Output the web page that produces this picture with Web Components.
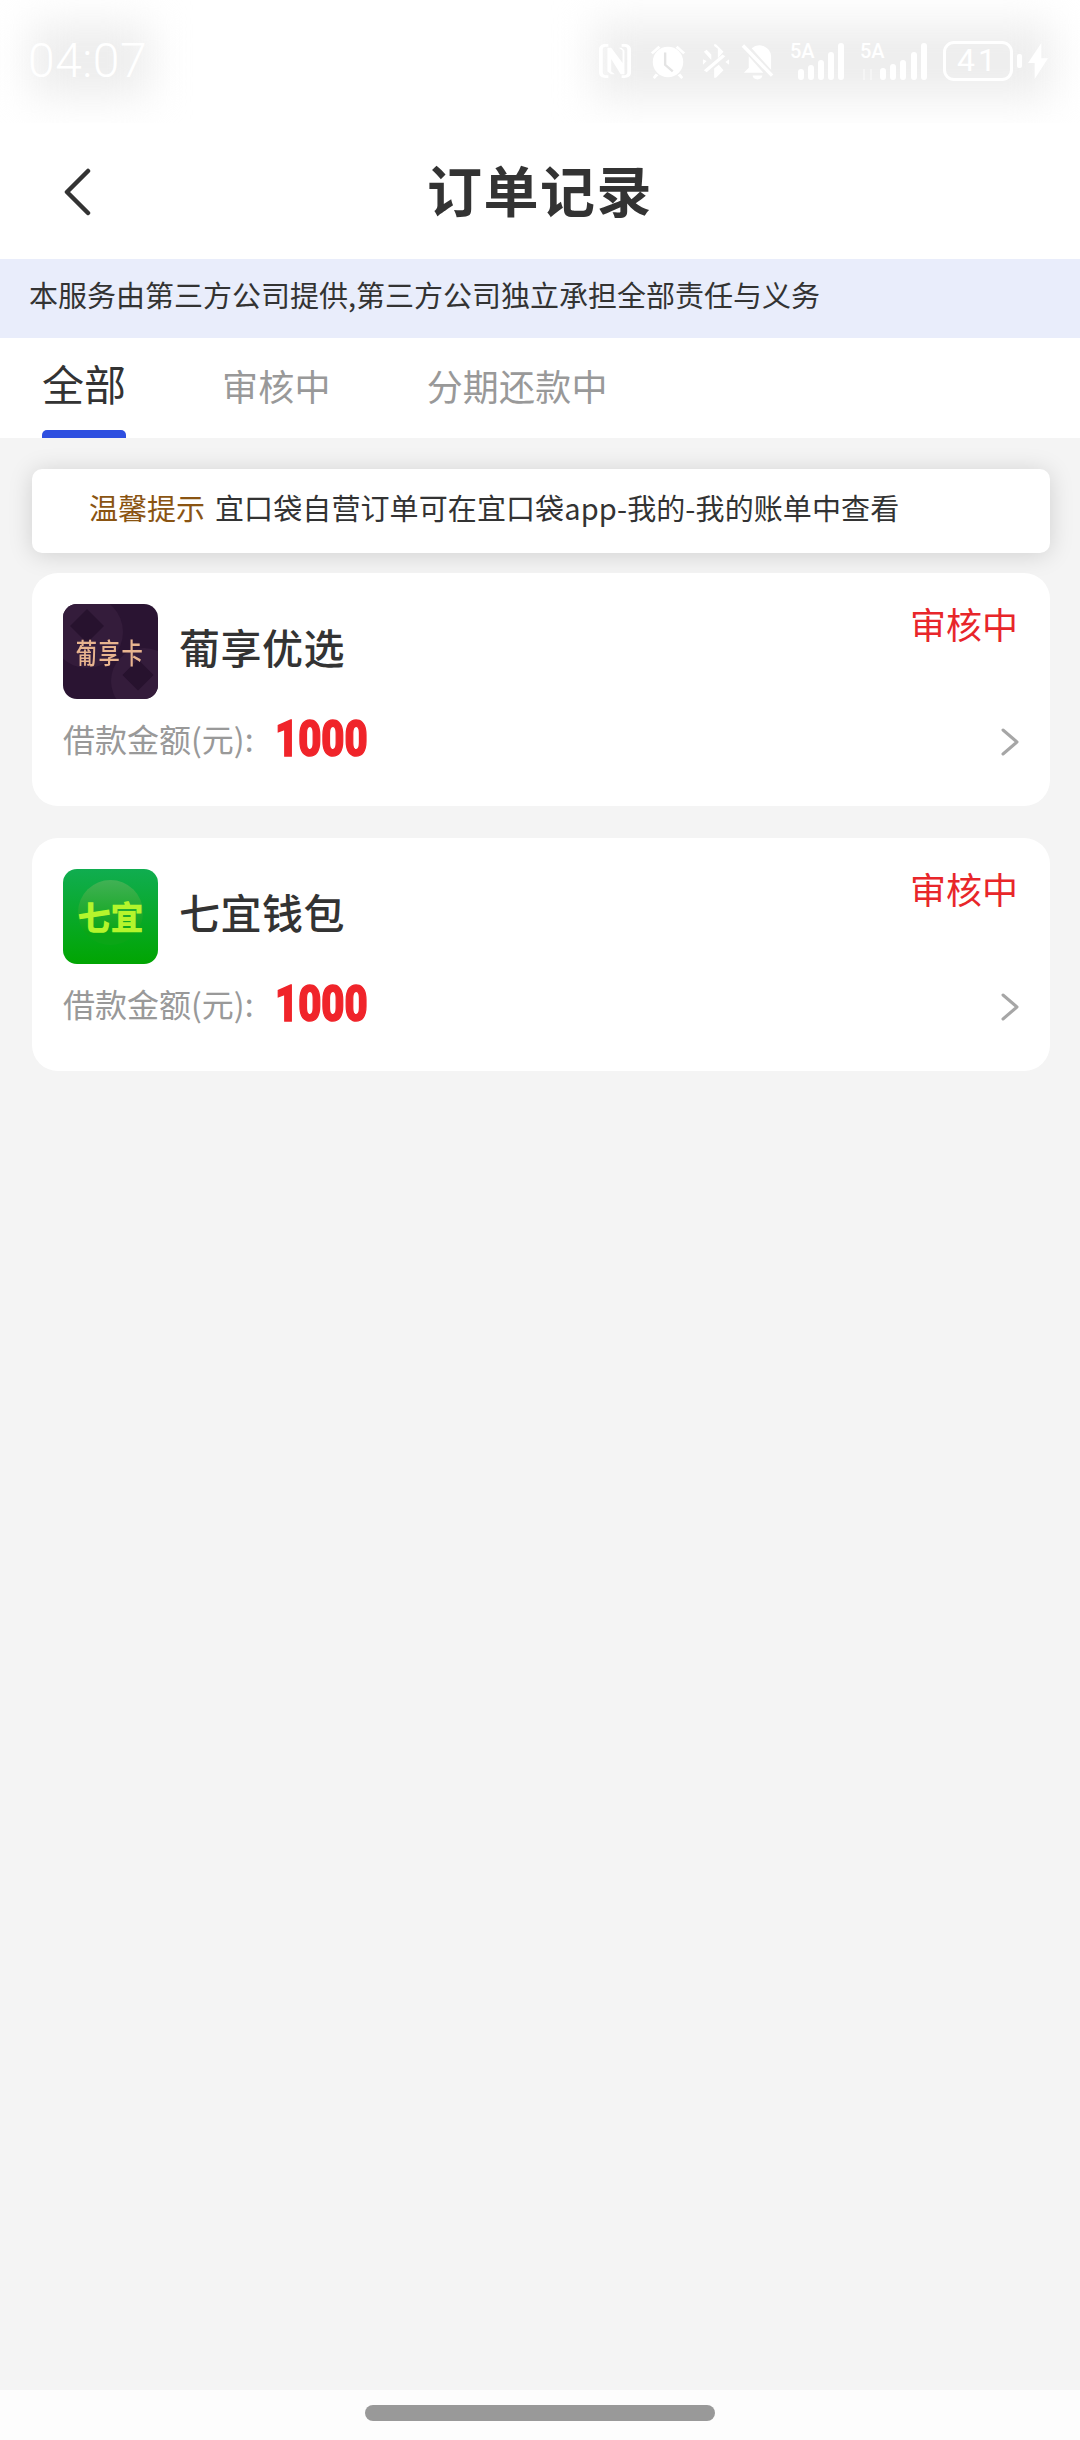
<!DOCTYPE html>
<html lang="zh"><head><meta charset="utf-8"><title>订单记录</title>
<style>
html,body{margin:0;padding:0;height:100%;background:#f4f4f4}
body{font-family:"Noto Sans CJK SC","Noto Sans",sans-serif;color:#333}
</style></head><body>
<app-screen>
  <status-bar></status-bar>
  <nav-bar>订单记录</nav-bar>
  <notice-banner>本服务由第三方公司提供,第三方公司独立承担全部责任与义务</notice-banner>
  <tab-bar>
    <tab-item active>全部</tab-item>
    <tab-item>审核中</tab-item>
    <tab-item>分期还款中</tab-item>
  </tab-bar>
  <order-list>
    <tip-card label="温馨提示">宜口袋自营订单可在宜口袋app-我的-我的账单中查看</tip-card>
    <order-card name="葡享优选" status="审核中" amount="1000"><app-logo slot="logo" kind="pu">葡享卡</app-logo></order-card>
    <order-card name="七宜钱包" status="审核中" amount="1000"><app-logo slot="logo" kind="qi">七宜</app-logo></order-card>
  </order-list>
  <home-indicator></home-indicator>
</app-screen>
<script>
function def(name, html){
  customElements.define(name, class extends HTMLElement{
    constructor(){super();const r=this.attachShadow({mode:'open'});
      r.innerHTML = typeof html==='function'?html(this):html;}
    connectedCallback(){ if(typeof html==='function') this.shadowRoot.innerHTML=html(this); }
  });
}
def('app-screen',`<style>:host{display:flex;flex-direction:column;width:1080px;height:2440px;overflow:hidden;background:#f4f4f4}</style><slot></slot>`);
def('status-bar',`<style>
:host{display:flex;justify-content:space-between;height:123px;padding:42px 32px 0 28px;box-sizing:border-box;background:#fff;color:#fff}
.g{position:relative;display:flex;height:38px}
.g::before{content:"";position:absolute;background:#ededed;filter:blur(20px);z-index:0}
.t::before{inset:-18px -4px -16px 2px}
.r::before{inset:-18px -4px -18px -4px}
.g>*{position:relative;z-index:1}
.t{font:300 48px/38px "Roboto",sans-serif;letter-spacing:.5px;width:118px}
.r{align-items:center}
svg{display:block;flex:none}
.sig{position:relative;width:55px;height:38px}
.sig b{position:absolute;left:0;top:-1px;font:500 20px/20px "Roboto",sans-serif}
.sig svg{position:absolute;left:0;top:0}
.bat{box-sizing:border-box;width:70px;height:40px;border:3px solid #fff;border-radius:11px;font:400 32px/33px "Roboto",sans-serif;text-align:center;letter-spacing:3px;margin-left:15px}
</style>
<div class="g t"><span>04:07</span></div>
<div class="g r">
<svg width="34" height="38" viewBox="0 0 36 38" fill="#fff"><path d="M8 1h3v3H8C6 4 5 5 5 7v24c0 2 1 3 3 3h3v3H8c-4 0-7-2-7-6V7c0-4 3-6 7-6zM25 1h3c4 0 7 2 7 6v24c0 4-3 6-7 6h-3v-3h3c2 0 3-1 3-3V7c0-2-1-3-3-3h-3z"/><path d="M10 5l4 0 12 16V8l-4-3h3l3 3v25h-4L14 17v13l4 3h-4l-4-3z"/></svg>
<svg style="margin-left:16px" width="40" height="38" viewBox="0 0 42 38" fill="#fff"><circle cx="21" cy="20" r="16"/><path d="M3 10l8-7 2 2-8 7zM39 10l-8-7-2 2 8 7zM8 32l-3 4 2 2 4-4zM34 32l3 4-2 2-4-4z"/><path d="M18 10v13l8 7" fill="none" stroke="#e4e4e4" stroke-width="2.5"/></svg>
<svg style="margin-left:14px" width="28" height="38" viewBox="0 0 30 38" fill="#fff"><path d="M13 1h2l8 8-6 7V6l-4-3zM13 37h2l8-8-5-6-5 4v7zM2 9l3-2 5 5v6zM5 31l-3-2 20-17 3 2zM1 17l4 2-4 4zM29 17v6l-4-3z"/></svg>
<svg style="margin-left:10px" width="35" height="38" viewBox="0 0 36 38" fill="#fff"><path d="M12 6a12 12 0 0 1 20 8v14zM9 14v12l-5 5h20zM13 34h10a5 4 0 0 1-10 0z"/><path d="M3 3l30 31" stroke="#fff" stroke-width="3.5"/></svg>
<div class="sig" style="margin-left:15px"><b>5A</b><svg width="55" height="38" viewBox="0 0 55 38" fill="#fff"><rect x="8" y="27" width="6" height="11" rx="3"/><rect x="18" y="23" width="6" height="15" rx="3"/><rect x="28" y="18" width="6" height="20" rx="3"/><rect x="38" y="10" width="6" height="28" rx="3"/><rect x="48" y="1" width="6" height="37" rx="3"/></svg></div>
<div class="sig" style="margin-left:15px;width:68px"><b>5A</b><svg width="68" height="38" viewBox="0 0 68 38" fill="#fff"><rect x="3" y="27" width="2" height="11" opacity=".4"/><rect x="10" y="27" width="2" height="11" opacity=".4"/><rect x="20" y="26" width="6" height="12" rx="3"/><rect x="30" y="22" width="6" height="16" rx="3"/><rect x="40" y="18" width="6" height="20" rx="3"/><rect x="51" y="10" width="6" height="28" rx="3"/><rect x="61" y="1" width="6" height="37" rx="3"/></svg></div>
<div class="bat">41</div>
<svg style="margin-left:4px" width="5" height="14" viewBox="0 0 5 14" fill="#fff"><rect width="5" height="14" rx="2"/></svg>
<svg style="margin-left:6px" width="20" height="38" viewBox="0 0 21 38" fill="#fff"><path d="M14 0v16h7L7 38V21H0z"/></svg>
</div>`);
def('nav-bar',`<style>
:host{display:flex;align-items:center;justify-content:center;position:relative;height:136px;box-sizing:border-box;padding-bottom:6px;background:#fff;font:700 55px/64px "Noto Sans CJK SC",sans-serif;color:#333;letter-spacing:1.5px}
svg{position:absolute;left:63px;top:45px}
</style><svg width="30" height="48" viewBox="0 0 30 48" fill="none" stroke="#333" stroke-width="4.5" stroke-linecap="round" stroke-linejoin="round"><path d="M25 3L4 24l21 21"/></svg><slot></slot>`);
def('notice-banner',`<style>:host{display:flex;align-items:center;height:79px;box-sizing:border-box;padding:0 0 9px 29px;background:#e9edfb;font:400 29px/40px "Noto Sans CJK SC",sans-serif;color:#333}</style><slot></slot>`);
def('tab-bar',`<style>:host{display:flex;align-items:baseline;gap:96px;height:100px;padding-left:42px;background:#fff;box-sizing:border-box}</style><slot></slot>`);
customElements.define('tab-item',class extends HTMLElement{
  constructor(){super();this.attachShadow({mode:'open'}).innerHTML=`<style>
  :host{display:block;position:relative;height:100px;box-sizing:border-box;padding-top:20px;font:400 36px/50px "Noto Sans CJK SC",sans-serif;color:#999;letter-spacing:.2px}
  :host([active]){font-size:42px;color:#333;letter-spacing:0}
  :host([active])::after{content:"";position:absolute;left:0;right:0;bottom:0;height:8px;background:#2e4fe0;border-radius:5px 5px 0 0}
  </style><slot></slot>`;}
});
def('order-list',`<style>:host{flex:1;display:flex;flex-direction:column;gap:32px;padding:31px 30px 0 32px;background:#f4f4f4}::slotted(tip-card){margin-bottom:-12px}</style><slot></slot>`);
def('tip-card',h=>`<style>:host{display:flex;align-items:center;gap:10px;height:84px;box-sizing:border-box;padding:0 0 9px 57px;background:#fff;border-radius:10px;box-shadow:0 2px 24px rgba(0,0,0,.15);font:400 29px/40px "Noto Sans CJK SC",sans-serif;color:#333}
b{font-weight:400;color:#8a5412}span{letter-spacing:.1px}</style><b>${h.getAttribute('label')||''}</b><span><slot></slot></span>`);
def('order-card',h=>`<style>
:host{display:block;height:233px;box-sizing:border-box;padding:31px 31px 0 31px;background:#fff;border-radius:26px}
.top{display:flex;height:95px}
.name{flex:1;margin:0 0 12px 21px;align-self:center;font:500 41px/50px "Noto Sans CJK SC",sans-serif;color:#333;letter-spacing:.5px}
.st{font:400 36px/38px "Noto Sans CJK SC",sans-serif;color:#e8262a;margin-right:1px}
.bot{display:flex;align-items:center;height:40px;margin-top:23px}
.lab{font:400 32px/40px "Noto Sans CJK SC",sans-serif;color:#999;width:212px;margin-bottom:8px}
.amt{display:inline-block;font:900 50px/40px "Roboto",sans-serif;color:#f0242a;transform:scaleX(.8);transform-origin:0 50%;-webkit-text-stroke:1.5px #f0242a;margin-bottom:6px}
svg{margin-left:auto}
</style>
<div class="top"><slot name="logo"></slot><div class="name">${h.getAttribute('name')||''}</div><div class="st">${h.getAttribute('status')||''}</div></div>
<div class="bot"><span class="lab">借款金额(元):</span><span class="amt">${h.getAttribute('amount')||''}</span>
<svg width="18" height="28" viewBox="0 0 18 28" fill="none" stroke="#a6a6a6" stroke-width="3" stroke-linecap="round" stroke-linejoin="round"><path d="M2 2l14 12L2 26"/></svg></div>`);
def('app-logo',h=>{
 const pu=h.getAttribute('kind')==='pu';
 return `<style>
 :host{display:flex;position:relative;overflow:hidden;align-items:center;justify-content:center;width:95px;height:95px;flex:none;border-radius:14px;background:${pu?'#2a1432':'linear-gradient(#10ad50,#01a502)'}}
 i{position:absolute}
 span{position:relative;white-space:nowrap;font-family:"Noto Sans CJK SC",sans-serif;${pu?'font-size:28px;font-weight:500;line-height:32px;letter-spacing:2px;color:#e8b48f;transform:scaleX(.76)':'font-size:33px;font-weight:900;line-height:40px;color:#b4f52c;margin-top:-2px'}}
 .a{left:-12px;top:-8px;width:72px;height:72px;border-radius:50%;background:#341c3b}
 .b{left:48px;top:44px;width:66px;height:66px;border-radius:50%;background:#341c3b}
 .d1{left:12px;top:10px;width:24px;height:24px;transform:rotate(45deg);background:#27122e}
 .d2{left:64px;top:60px;width:22px;height:22px;transform:rotate(45deg);background:#27122e}
 .c{left:15px;top:11px;width:65px;height:65px;border-radius:50%;background:linear-gradient(#41b155,#0aa616 80%)}
 </style>${pu?'<i class="a"></i><i class="b"></i><i class="d1"></i><i class="d2"></i>':'<i class="c"></i>'}<span><slot></slot></span>`;
});
def('home-indicator',`<style>:host{display:flex;justify-content:center;flex:none;height:50px;padding-top:15px;box-sizing:border-box;background:#fdfdfd}div{width:350px;height:16px;border-radius:8px;background:#999}</style><div></div>`);
</script>
</body></html>
